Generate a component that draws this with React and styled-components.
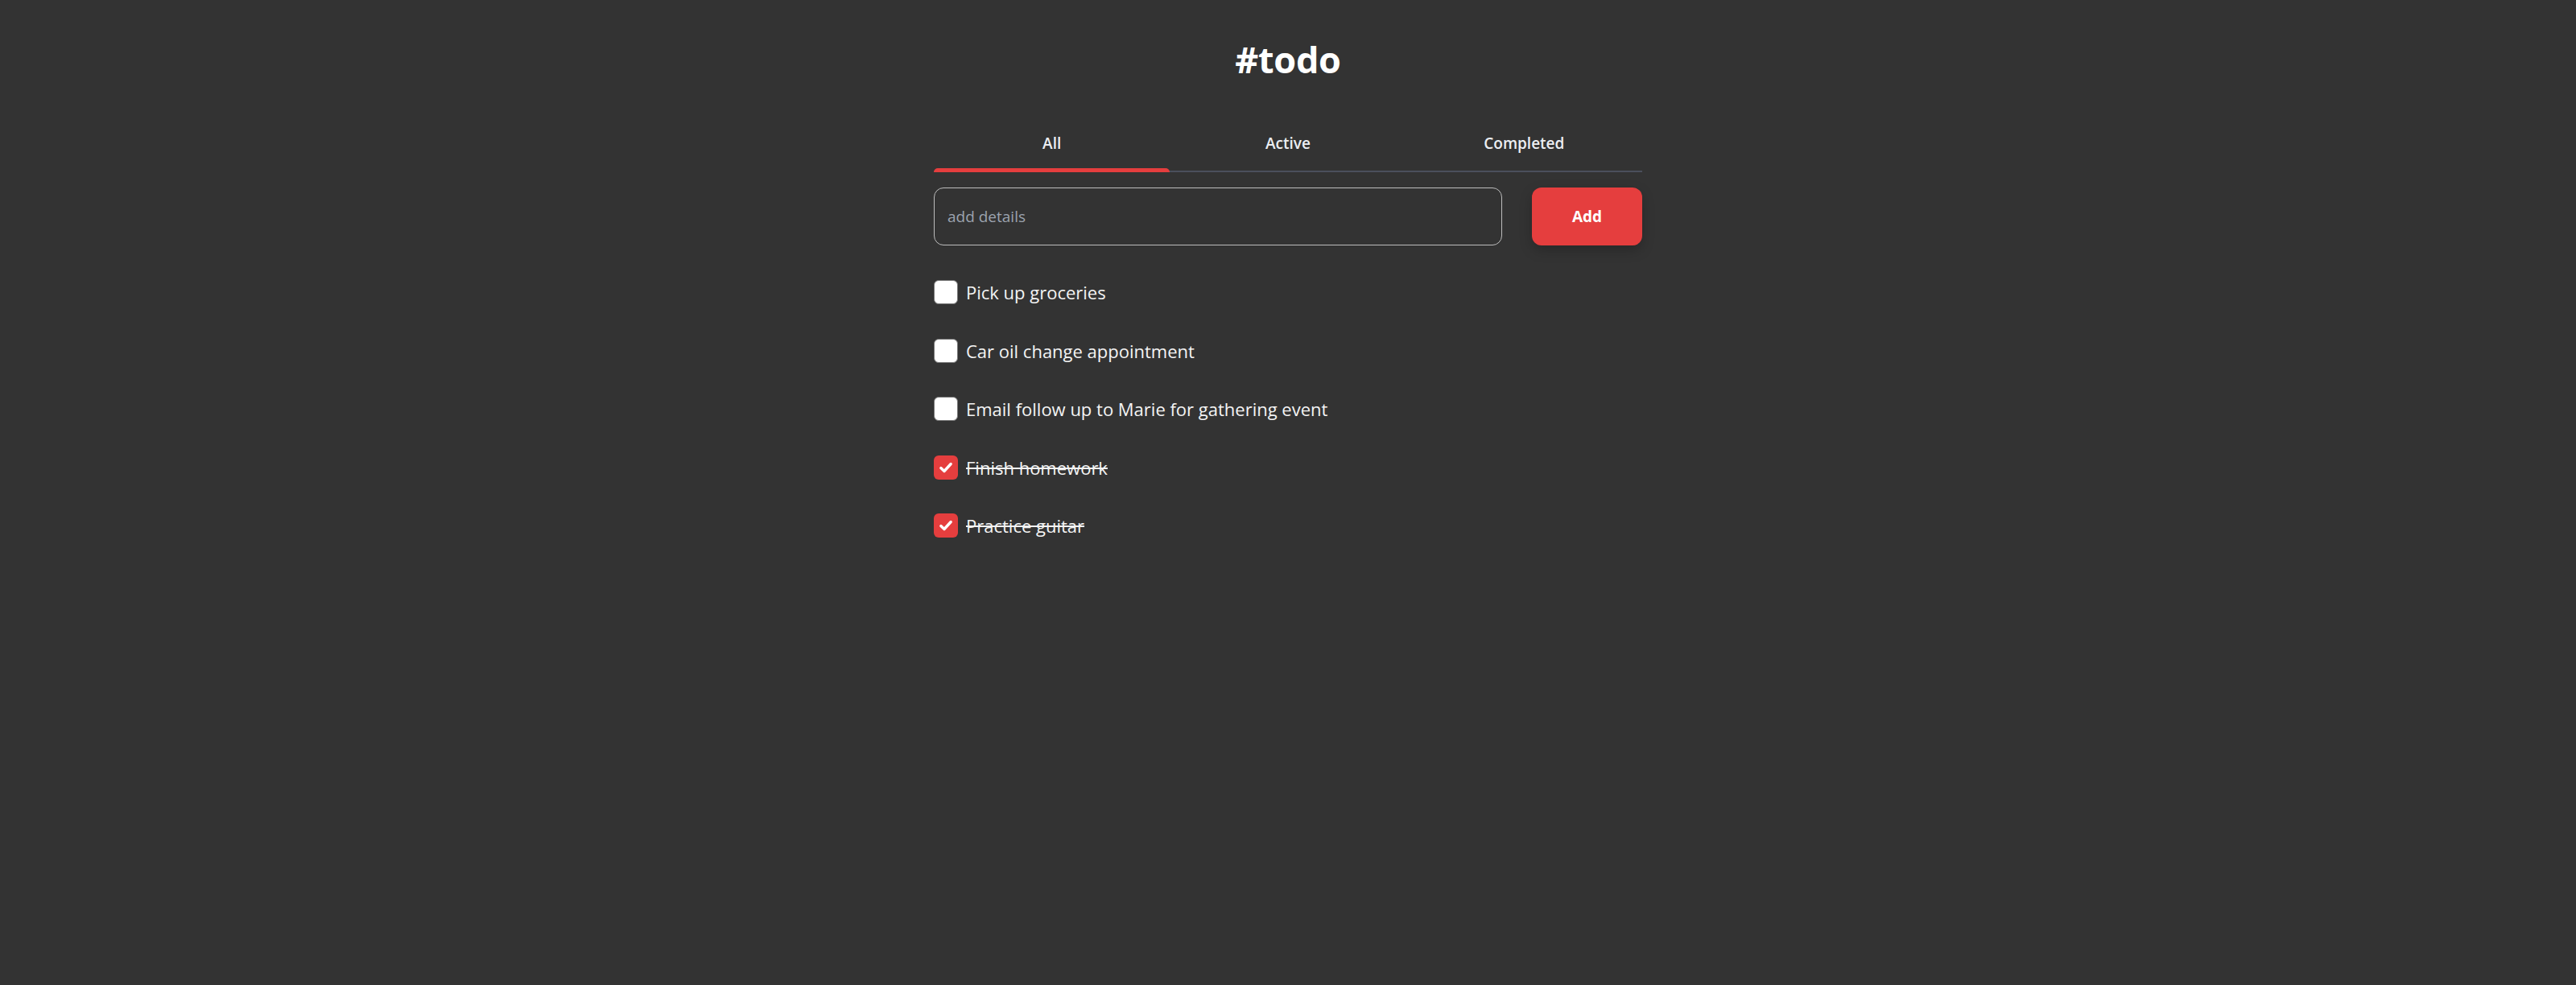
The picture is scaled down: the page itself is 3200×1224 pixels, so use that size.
import React from "react";
import styled, { createGlobalStyle } from "styled-components";

const Global = createGlobalStyle`
  html, body { margin: 0; padding: 0; background: #333333; }
  body { font-family: "Open Sans", "Noto Sans", sans-serif; color: #ffffff; min-height: 1224px; }
  * { box-sizing: border-box; }
`;

const Page = styled.div`
  display: flex;
  flex-direction: column;
  align-items: center;
  padding-top: 44px;
`;

const Title = styled.h1`
  margin: 0;
  font-family: "Open Sans", sans-serif;
  font-size: 45px;
  line-height: 60px;
  font-weight: 700;
  letter-spacing: -0.3px;
  color: #ffffff;
`;

const Container = styled.div`
  width: 880px;
  margin-top: 62px;
`;

const Tabs = styled.div`
  display: grid;
  grid-template-columns: repeat(3, 1fr);
  border-bottom: 2px solid #4b4f5c;
`;

const Tab = styled.button`
  position: relative;
  background: none;
  border: none;
  padding: 0 0 22px;
  font-family: "Open Sans", sans-serif;
  font-size: 19px;
  font-weight: 600;
  line-height: 24px;
  color: #eceef2;
  cursor: pointer;
  &::after {
    content: "";
    position: absolute;
    left: 0;
    right: 0;
    bottom: -2px;
    height: 5px;
    border-radius: 5px 5px 0 0;
    background: ${(p) => (p.$active ? "#e53e3e" : "transparent")};
  }
`;

const Form = styled.div`
  display: flex;
  gap: 37px;
  margin-top: 19px;
`;

const Input = styled.input`
  flex: 1;
  height: 72px;
  border: 1px solid #bdbdbd;
  border-radius: 12px;
  background: transparent;
  padding: 0 16px;
  font-family: "Open Sans", sans-serif;
  font-size: 19px;
  color: #fff;
  outline: none;
  &::placeholder { color: #9ca3af; }
`;

const AddButton = styled.button`
  width: 137px;
  height: 72px;
  border: none;
  border-radius: 12px;
  background: #e53e3e;
  color: #ffffff;
  font-family: "Open Sans", sans-serif;
  font-size: 19px;
  font-weight: 700;
  box-shadow: 0 6px 16px rgba(0, 0, 0, 0.22);
  cursor: pointer;
`;

const List = styled.ul`
  list-style: none;
  margin: 43px 0 0;
  padding: 0;
  display: flex;
  flex-direction: column;
  gap: 42.5px;
`;

const Item = styled.li`
  display: flex;
  align-items: center;
  gap: 10px;
  height: 30px;
`;

const Box = styled.span`
  width: 30px;
  height: 30px;
  border-radius: 6px;
  display: flex;
  align-items: center;
  justify-content: center;
  background: ${(p) => (p.$checked ? "#e53e3e" : "#ffffff")};
  border: ${(p) => (p.$checked ? "none" : "1px solid #767676")};
  flex-shrink: 0;
`;

const Label = styled.span`
  font-family: "Open Sans", sans-serif;
  font-size: 22px;
  font-weight: 500;
  color: #f4f4f4;
  text-decoration: ${(p) => (p.$done ? "line-through" : "none")};
`;

const todos = [
  { text: "Pick up groceries", done: false },
  { text: "Car oil change appointment", done: false },
  { text: "Email follow up to Marie for gathering event", done: false },
  { text: "Finish homework", done: true },
  { text: "Practice guitar", done: true },
];

const Check = () => (
  <svg width="18" height="18" viewBox="0 0 16 16">
    <path d="M2.5 8.5 L6.2 12 L13.5 4" fill="none" stroke="#fff" strokeWidth="3" strokeLinecap="round" strokeLinejoin="round" />
  </svg>
);

export default function App() {
  return (
    <>
      <Global />
      <Page>
        <Title>#todo</Title>
        <Container>
          <Tabs>
            <Tab $active>All</Tab>
            <Tab>Active</Tab>
            <Tab>Completed</Tab>
          </Tabs>
          <Form>
            <Input placeholder="add details" />
            <AddButton>Add</AddButton>
          </Form>
          <List>
            {todos.map((t) => (
              <Item key={t.text}>
                <Box $checked={t.done}>{t.done && <Check />}</Box>
                <Label $done={t.done}>{t.text}</Label>
              </Item>
            ))}
          </List>
        </Container>
      </Page>
    </>
  );
}
